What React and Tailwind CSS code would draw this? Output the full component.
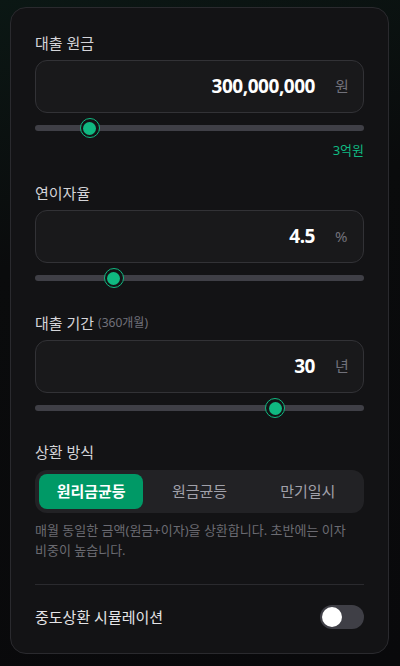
import { useState } from 'react';

const font = { fontFamily: '"Noto Sans", "Noto Sans CJK KR", sans-serif' };

function Slider({ pct }) {
  return (
    <div className="relative h-5 mt-[5px]">
      <div className="absolute left-0 right-0 top-[7px] h-[6px] rounded-full bg-[#3f3f46]" />
      <div
        className="absolute top-0 w-5 h-5 rounded-full border-[1.5px] border-[#10b981] bg-[#131315] flex items-center justify-center"
        style={{ left: `calc(${pct} * (100% - 20px))` }}
      >
        <div className="w-[13px] h-[13px] rounded-full bg-[#10b981]" />
      </div>
    </div>
  );
}

function Field({ label, sub, value, unit, pct, hint }) {
  return (
    <div>
      <div className="h-5 flex items-center text-[15px] text-[#d4d4d8]">
        {label}
        {sub && <span className="ml-1 text-xs text-[#71717a]">{sub}</span>}
      </div>
      <div className="mt-[7px] h-[53px] rounded-xl border border-[#323236] bg-[#19191b] flex items-center justify-end pr-4 gap-5">
        <span className="text-[19px] font-bold text-white tracking-tight">{value}</span>
        <span className="text-[15px] text-[#71717a] w-3 text-center">{unit}</span>
      </div>
      <Slider pct={pct} />
      {hint && <div className="mt-1 h-4 text-right text-[13px] leading-4 text-[#10b981]">{hint}</div>}
    </div>
  );
}

export default function App() {
  const [mode, setMode] = useState(0);
  const [on, setOn] = useState(false);
  const modes = ['원리금균등', '원금균등', '만기일시'];

  return (
    <div
      className="min-h-[666px] pt-[7px] pl-[10px] pr-[11px] bg-[linear-gradient(165deg,#0b1714_0%,#0a0b0c_35%,#09090b_100%)]"
      style={font}
    >
      <div className="rounded-2xl border border-[#2a2a2e] bg-[#131315] px-6 pt-[25px] pb-6">
        <div className="flex flex-col gap-[25px]">
          <Field label="대출 원금" value="300,000,000" unit="원" pct={0.145} hint="3억원" />
          <Field label="연이자율" value="4.5" unit="%" pct={0.223} />
          <Field label="대출 기간" sub="(360개월)" value="30" unit="년" pct={0.745} />
        </div>

        <div className="mt-6">
          <div className="h-5 flex items-center text-[15px] text-[#d4d4d8]">상환 방식</div>
          <div className="mt-2 grid grid-cols-3 gap-1 p-1 rounded-xl bg-[#222225]">
            {modes.map((m, i) => (
              <button
                key={m}
                onClick={() => setMode(i)}
                className={
                  i === mode
                    ? 'h-[35px] rounded-lg bg-[#009966] text-[15px] font-bold text-white'
                    : 'h-[35px] rounded-lg text-[15px] text-[#a1a1aa]'
                }
              >
                {m}
              </button>
            ))}
          </div>
          <p className="mt-[7px] text-[13px] leading-5 text-[#6b6b72] break-keep">
            매월 동일한 금액(원금+이자)을 상환합니다. 초반에는 이자 비중이 높습니다.
          </p>
        </div>

        <div className="mt-6 border-t border-[#2a2a2e] pt-5 flex items-center justify-between">
          <span className="text-[15px] text-[#e4e4e7]">중도상환 시뮬레이션</span>
          <button
            onClick={() => setOn(!on)}
            className={on ? 'w-11 h-6 rounded-full bg-[#10b981] p-[2px] flex justify-end' : 'w-11 h-6 rounded-full bg-[#3f3f46] p-[2px] flex justify-start'}
          >
            <span className="w-5 h-5 rounded-full bg-white" />
          </button>
        </div>
      </div>
    </div>
  );
}
